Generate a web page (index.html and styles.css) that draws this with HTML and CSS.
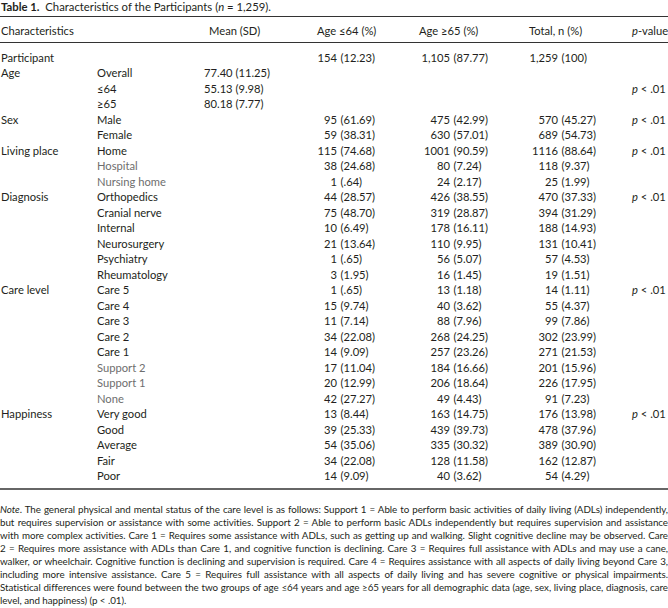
FILE: index.html
```html
<!DOCTYPE html>
<html lang="en">
<head>
<meta charset="utf-8">
<title>Table 1. Characteristics of the Participants</title>
<link rel="stylesheet" href="styles.css">
</head>
<body>
<div class="page">
  <p class="caption"><b>Table 1.</b>&nbsp; Characteristics of the Participants (<i>n</i> = 1,259).</p>
  <table class="chars">
    <colgroup>
      <col class="c1"><col class="c2"><col class="c3"><col class="c4"><col class="c5"><col class="c6"><col class="c7">
    </colgroup>
    <thead>
      <tr><th colspan="2">Characteristics</th><th class="mean-h">Mean (SD)</th><th>Age ≤64 (%)</th><th>Age ≥65 (%)</th><th>Total, n (%)</th><th><i>p</i>-value</th></tr>
    </thead>
    <tbody>
      <tr class="first"><td>Participant</td><td></td><td></td><td><span class="n a">154</span><span class="pc">(12.23)</span></td><td><span class="n b">1,105</span><span class="pc">(87.77)</span></td><td><span class="n c">1,259</span><span class="pc">(100)</span></td><td></td></tr>
      <tr><td>Age</td><td>Overall</td><td>77.40 (11.25)</td><td></td><td></td><td></td><td></td></tr>
      <tr><td></td><td>≤64</td><td>55.13 (9.98)</td><td></td><td></td><td></td><td><i>p</i> &lt; .01</td></tr>
      <tr><td></td><td>≥65</td><td>80.18 (7.77)</td><td></td><td></td><td></td><td></td></tr>
      <tr><td>Sex</td><td>Male</td><td></td><td><span class="n a">95</span><span class="pc">(61.69)</span></td><td><span class="n b">475</span><span class="pc">(42.99)</span></td><td><span class="n c">570</span><span class="pc">(45.27)</span></td><td><i>p</i> &lt; .01</td></tr>
      <tr><td></td><td>Female</td><td></td><td><span class="n a">59</span><span class="pc">(38.31)</span></td><td><span class="n b">630</span><span class="pc">(57.01)</span></td><td><span class="n c">689</span><span class="pc">(54.73)</span></td><td></td></tr>
      <tr><td>Living place</td><td>Home</td><td></td><td><span class="n a">115</span><span class="pc">(74.68)</span></td><td><span class="n b">1001</span><span class="pc">(90.59)</span></td><td><span class="n c">1116</span><span class="pc">(88.64)</span></td><td><i>p</i> &lt; .01</td></tr>
      <tr><td></td><td class="dim">Hospital</td><td></td><td><span class="n a">38</span><span class="pc">(24.68)</span></td><td><span class="n b">80</span><span class="pc">(7.24)</span></td><td><span class="n c">118</span><span class="pc">(9.37)</span></td><td></td></tr>
      <tr><td></td><td class="dim">Nursing home</td><td></td><td><span class="n a">1</span><span class="pc">(.64)</span></td><td><span class="n b">24</span><span class="pc">(2.17)</span></td><td><span class="n c">25</span><span class="pc">(1.99)</span></td><td></td></tr>
      <tr><td>Diagnosis</td><td>Orthopedics</td><td></td><td><span class="n a">44</span><span class="pc">(28.57)</span></td><td><span class="n b">426</span><span class="pc">(38.55)</span></td><td><span class="n c">470</span><span class="pc">(37.33)</span></td><td><i>p</i> &lt; .01</td></tr>
      <tr><td></td><td>Cranial nerve</td><td></td><td><span class="n a">75</span><span class="pc">(48.70)</span></td><td><span class="n b">319</span><span class="pc">(28.87)</span></td><td><span class="n c">394</span><span class="pc">(31.29)</span></td><td></td></tr>
      <tr><td></td><td>Internal</td><td></td><td><span class="n a">10</span><span class="pc">(6.49)</span></td><td><span class="n b">178</span><span class="pc">(16.11)</span></td><td><span class="n c">188</span><span class="pc">(14.93)</span></td><td></td></tr>
      <tr><td></td><td>Neurosurgery</td><td></td><td><span class="n a">21</span><span class="pc">(13.64)</span></td><td><span class="n b">110</span><span class="pc">(9.95)</span></td><td><span class="n c">131</span><span class="pc">(10.41)</span></td><td></td></tr>
      <tr><td></td><td>Psychiatry</td><td></td><td><span class="n a">1</span><span class="pc">(.65)</span></td><td><span class="n b">56</span><span class="pc">(5.07)</span></td><td><span class="n c">57</span><span class="pc">(4.53)</span></td><td></td></tr>
      <tr><td></td><td>Rheumatology</td><td></td><td><span class="n a">3</span><span class="pc">(1.95)</span></td><td><span class="n b">16</span><span class="pc">(1.45)</span></td><td><span class="n c">19</span><span class="pc">(1.51)</span></td><td></td></tr>
      <tr><td>Care level</td><td>Care 5</td><td></td><td><span class="n a">1</span><span class="pc">(.65)</span></td><td><span class="n b">13</span><span class="pc">(1.18)</span></td><td><span class="n c">14</span><span class="pc">(1.11)</span></td><td><i>p</i> &lt; .01</td></tr>
      <tr><td></td><td>Care 4</td><td></td><td><span class="n a">15</span><span class="pc">(9.74)</span></td><td><span class="n b">40</span><span class="pc">(3.62)</span></td><td><span class="n c">55</span><span class="pc">(4.37)</span></td><td></td></tr>
      <tr><td></td><td>Care 3</td><td></td><td><span class="n a">11</span><span class="pc">(7.14)</span></td><td><span class="n b">88</span><span class="pc">(7.96)</span></td><td><span class="n c">99</span><span class="pc">(7.86)</span></td><td></td></tr>
      <tr><td></td><td>Care 2</td><td></td><td><span class="n a">34</span><span class="pc">(22.08)</span></td><td><span class="n b">268</span><span class="pc">(24.25)</span></td><td><span class="n c">302</span><span class="pc">(23.99)</span></td><td></td></tr>
      <tr><td></td><td>Care 1</td><td></td><td><span class="n a">14</span><span class="pc">(9.09)</span></td><td><span class="n b">257</span><span class="pc">(23.26)</span></td><td><span class="n c">271</span><span class="pc">(21.53)</span></td><td></td></tr>
      <tr><td></td><td class="dim">Support 2</td><td></td><td><span class="n a">17</span><span class="pc">(11.04)</span></td><td><span class="n b">184</span><span class="pc">(16.66)</span></td><td><span class="n c">201</span><span class="pc">(15.96)</span></td><td></td></tr>
      <tr><td></td><td class="dim">Support 1</td><td></td><td><span class="n a">20</span><span class="pc">(12.99)</span></td><td><span class="n b">206</span><span class="pc">(18.64)</span></td><td><span class="n c">226</span><span class="pc">(17.95)</span></td><td></td></tr>
      <tr><td></td><td class="dim">None</td><td></td><td><span class="n a">42</span><span class="pc">(27.27)</span></td><td><span class="n b">49</span><span class="pc">(4.43)</span></td><td><span class="n c">91</span><span class="pc">(7.23)</span></td><td></td></tr>
      <tr><td>Happiness</td><td>Very good</td><td></td><td><span class="n a">13</span><span class="pc">(8.44)</span></td><td><span class="n b">163</span><span class="pc">(14.75)</span></td><td><span class="n c">176</span><span class="pc">(13.98)</span></td><td><i>p</i> &lt; .01</td></tr>
      <tr><td></td><td>Good</td><td></td><td><span class="n a">39</span><span class="pc">(25.33)</span></td><td><span class="n b">439</span><span class="pc">(39.73)</span></td><td><span class="n c">478</span><span class="pc">(37.96)</span></td><td></td></tr>
      <tr><td></td><td>Average</td><td></td><td><span class="n a">54</span><span class="pc">(35.06)</span></td><td><span class="n b">335</span><span class="pc">(30.32)</span></td><td><span class="n c">389</span><span class="pc">(30.90)</span></td><td></td></tr>
      <tr><td></td><td>Fair</td><td></td><td><span class="n a">34</span><span class="pc">(22.08)</span></td><td><span class="n b">128</span><span class="pc">(11.58)</span></td><td><span class="n c">162</span><span class="pc">(12.87)</span></td><td></td></tr>
      <tr class="last"><td></td><td>Poor</td><td></td><td><span class="n a">14</span><span class="pc">(9.09)</span></td><td><span class="n b">40</span><span class="pc">(3.62)</span></td><td><span class="n c">54</span><span class="pc">(4.29)</span></td><td></td></tr>
    </tbody>
  </table>
  <div class="note">
    <span class="ln"><i>Note</i>. The general physical and mental status of the care level is as follows: Support 1 = Able to perform basic activities of daily living (ADLs) independently,</span>
    <span class="ln">but requires supervision or assistance with some activities. Support 2 = Able to perform basic ADLs independently but requires supervision and assistance</span>
    <span class="ln">with more complex activities. Care 1 = Requires some assistance with ADLs, such as getting up and walking. Slight cognitive decline may be observed. Care</span>
    <span class="ln">2 = Requires more assistance with ADLs than Care 1, and cognitive function is declining. Care 3 = Requires full assistance with ADLs and may use a cane,</span>
    <span class="ln">walker, or wheelchair. Cognitive function is declining and supervision is required. Care 4 = Requires assistance with all aspects of daily living beyond Care 3,</span>
    <span class="ln">including more intensive assistance. Care 5 = Requires full assistance with all aspects of daily living and has severe cognitive or physical impairments.</span>
    <span class="ln">Statistical differences were found between the two groups of age ≤64 years and age ≥65 years for all demographic data (age, sex, living place, diagnosis, care</span>
    <span class="ln end">level, and happiness) (p &lt; .01).</span>
  </div>
</div>
</body>
</html>
```

FILE: styles.css
```css
html, body {
  margin: 0;
  padding: 0;
  background: #ffffff;
}

body {
  font-family: "Lato", "Open Sans", sans-serif;
  color: #231f20;
}

.page {
  width: 668px;
}

.caption {
  margin: 0;
  padding-left: 1px;
  font-size: 11.3px;
  line-height: 13px;
  height: 16px;
}

.chars {
  width: 668px;
  border-collapse: collapse;
  table-layout: fixed;
  font-size: 11.2px;
  border-top: 1.5px solid #333333;
  border-bottom: 2px solid #666666;
}

.c1 { width: 97px; }
.c2 { width: 107px; }
.c3 { width: 113px; }
.c4 { width: 102px; }
.c5 { width: 110px; }
.c6 { width: 103px; }
.c7 { width: 36px; }

.chars th {
  font-weight: normal;
  text-align: left;
  white-space: nowrap;
  padding: 6px 0 3px 0;
  line-height: 15.5px;
  border-bottom: 1px solid #333333;
}

.chars th:first-child {
  padding-left: 1px;
}

.chars .mean-h {
  padding-left: 5px;
}

.chars td {
  padding: 0;
  line-height: 15.5px;
  white-space: nowrap;
  vertical-align: top;
}

.chars td:first-child {
  padding-left: 1px;
}

.chars tr.first td {
  padding-top: 7px;
}

.chars tr.last td {
  padding-bottom: 4px;
}

.dim {
  color: #6e6e6e;
}

.n {
  display: inline-block;
  text-align: right;
}

.n.a { width: 20px; }
.n.b { width: 31px; }
.n.c { width: 29px; }

.pc {
  margin-left: 3.5px;
}

.note {
  margin-top: 13px;
  font-size: 9.8px;
  line-height: 13px;
  letter-spacing: -0.05px;
}

.note .ln {
  display: block;
  text-align: justify;
  text-align-last: justify;
}

.note .ln.end {
  text-align-last: left;
}
```
